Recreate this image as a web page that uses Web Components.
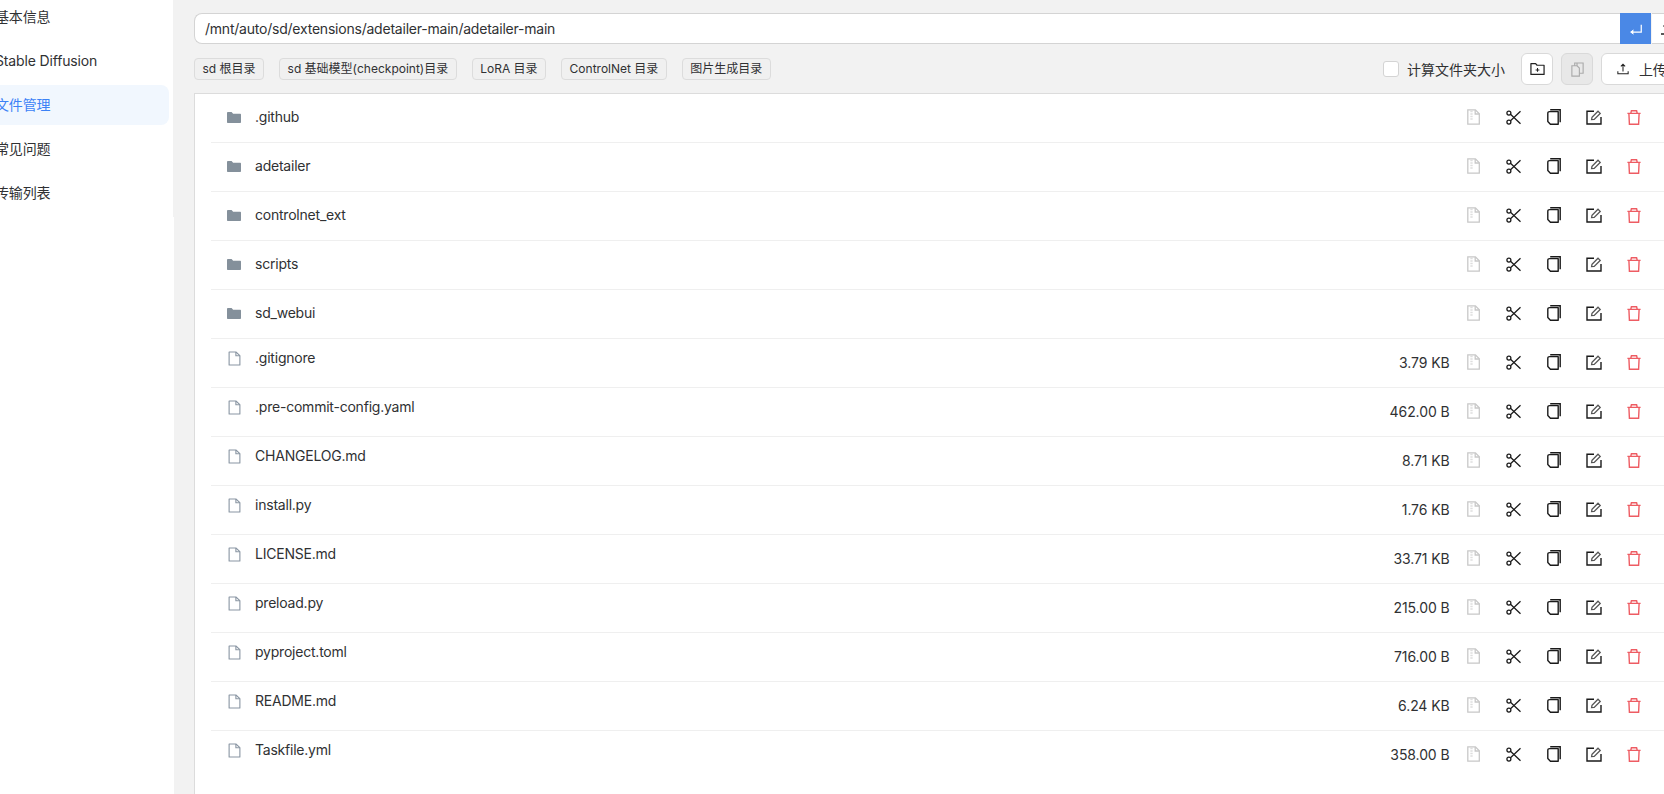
<!DOCTYPE html>
<html lang="zh">
<head>
<meta charset="utf-8">
<title>文件管理</title>
<style>
  html, body { margin: 0; height: 100%; overflow: hidden; background: #f2f2f2; }
  body { font-family: Inter, "Noto Sans CJK SC", sans-serif; color: #303133; letter-spacing: -0.22px; }
</style>
</head>
<body>
<app-shell>
  <side-menu slot="side"></side-menu>
  <path-bar slot="top" value="/mnt/auto/sd/extensions/adetailer-main/adetailer-main"></path-bar>
  <tool-bar slot="top"></tool-bar>
  <file-list slot="main"></file-list>
</app-shell>

<script>
const ICONS = {
  folder: `<svg viewBox="0 0 14 11"><path fill="#84909b" d="M0 1.2C0 .5.4 0 1 0h3.6l1.5 1.7H13c.6 0 1 .4 1 1V10c0 .6-.4 1-1 1H1c-.6 0-1-.4-1-1z"/></svg>`,
  file: `<svg viewBox="0 0 14 16" fill="none" stroke="#8a96a3" stroke-width="1.2"><path d="M1.2 1h7.3l4.3 4v10H1.2z" stroke-linejoin="round"/><path d="M8.5 1v4h4.3"/></svg>`,
  zip: `<svg viewBox="0 0 13 16" fill="none" stroke="#c8c8c8" stroke-width="1.3"><path d="M.8.8h7.6l3.9 4v10.4H.8z"/><path d="M8.2 1v4h4"/><path d="M3.6 2.5h2.2M3.6 5h2.2M3.6 7.5h2.2M3.6 10h2.2" stroke-width="1.6" stroke-dasharray="1 .8"/></svg>`,
  cut: `<svg viewBox="0 0 15 15" fill="none" stroke="#1a1a1a" stroke-width="1.25"><circle cx="2.9" cy="3" r="2"/><circle cx="2.9" cy="12" r="2"/><path d="M4.5 4.2 14.5 13.8M4.5 10.8 14.5 1.2"/></svg>`,
  copy: `<svg viewBox="0 0 14 16" fill="none" stroke="#1a1a1a" stroke-width="1.4"><path d="M2.6 2.6h8.6v12.6H3.4L.8 12.6V4.4C.8 3.2 1.5 2.6 2.6 2.6z" stroke-linejoin="round"/><path d="M3.2.8h10v12.4"/></svg>`,
  edit: `<svg viewBox="0 0 16 15" fill="none" stroke="#1a1a1a" stroke-width="1.4"><path d="M8 1.2H1v12.8H15V7"/><path d="M5.6 9.6 6 7.2 12 1.2l2.2 2.2-6 6z" fill="#fff" stroke="#555" stroke-width="1.3"/></svg>`,
  trash: `<svg viewBox="0 0 14 15" fill="none" stroke="#ee5c63" stroke-width="1.4"><path d="M.4 3.4h13.2M3.8 3.2 4.4.8h5.2l.6 2.4M1.9 3.5l.5 10.8h9.2l.5-10.8"/></svg>`,
  enter: `<svg viewBox="0 0 16 12" fill="none" stroke="#fff" stroke-width="1.4"><path d="M14 1v8.5H2"/><path d="M5 7 2 9.5 5 12" fill="#fff" stroke-width="1"/></svg>`,
  upload: `<svg viewBox="0 0 14 14" fill="none" stroke="#222" stroke-width="1.2"><path d="M7 10V1.5M4.5 4 7 1.5 9.5 4M1 9.5V12.5h12V9.5"/></svg>`,
  newdir: `<svg viewBox="0 0 16 14" fill="none" stroke="#222" stroke-width="1.3"><path d="M1 1.2h5l1.5 1.8H15v9.8H1z" stroke-linejoin="round"/><path d="M8 6v4M6 8h4" stroke-width="1.1"/></svg>`,
  paste: `<svg viewBox="0 0 14 16" fill="none" stroke="#aaa" stroke-width="1.2"><path d="M1 4h5.5L9 6.5V15H1z"/><path d="M4 4V1h9v11H9M6.5 1v3"/></svg>`,
  updir: `<svg viewBox="0 0 12 13" fill="none" stroke="#222" stroke-width="1.4"><path d="M6 9V1.5M2.5 4.5 6 1l3.5 3.5M0 12h12"/></svg>`,
};

const MENU = ["基本信息", "Stable Diffusion", "文件管理", "常见问题", "传输列表"];
const TAGS = ["sd 根目录", "sd 基础模型(checkpoint)目录", "LoRA 目录", "ControlNet 目录", "图片生成目录"];
const FILES = [
  [".github"], ["adetailer"], ["controlnet_ext"], ["scripts"], ["sd_webui"],
  [".gitignore", "3.79 KB"], [".pre-commit-config.yaml", "462.00 B"], ["CHANGELOG.md", "8.71 KB"],
  ["install.py", "1.76 KB"], ["LICENSE.md", "33.71 KB"], ["preload.py", "215.00 B"],
  ["pyproject.toml", "716.00 B"], ["README.md", "6.24 KB"], ["Taskfile.yml", "358.00 B"],
];

// Page frame: the window is scrolled a little sideways in the reference,
// so the frame is wider than the window and pulled to the left.
class AppShell extends HTMLElement {
  constructor() {
    super();
    this.attachShadow({ mode: "open" }).innerHTML = /*html*/`
      <style>
        :host { display: flex; height: 794px; width: 1760px; margin-left: -20px; }
        aside { flex: none; width: 194px; }
        section { flex: none; width: 1480px; padding: 13px 0 0 20px; box-sizing: border-box; min-height: 0; display: flex; flex-direction: column; }
      </style>
      <aside><slot name="side"></slot></aside>
      <section><slot name="top"></slot><slot name="main"></slot></section>`;
  }
}

class SideMenu extends HTMLElement {
  constructor() {
    super();
    const items = MENU.map((m, i) => `<li class="${i === 2 ? "on" : ""}">${m}</li>`).join("");
    this.attachShadow({ mode: "open" }).innerHTML = /*html*/`
      <style>
        :host { display: block; background: #fff; height: 100%; font-size: 14px; letter-spacing: -0.15px; }
        nav { height: 217px; border-right: 1px solid #f2f2f2; box-sizing: border-box; }
        ul { list-style: none; margin: 0; padding: 0 4px 0 0; position: relative; top: -3px; }
        li { height: 40px; line-height: 40px; margin-bottom: 4px; padding-left: 15px; border-radius: 8px; color: #303133; }
        li.on { background: #f1f7fe; color: #3b82f6; }
      </style>
      <nav><ul>${items}</ul></nav>`;
  }
}

class PathBar extends HTMLElement {
  constructor() {
    super();
    this.attachShadow({ mode: "open" }).innerHTML = /*html*/`
      <style>
        :host { display: flex; height: 31px; box-sizing: border-box; width: 1490px; font-size: 14px; }
        .field { flex: none; width: 1426px; box-sizing: border-box; background: #fff; border: 1px solid #d4d4d4; border-right: 0; border-radius: 8px 0 0 8px; padding: 0 10px; line-height: 30px; color: #303133; }
        .go { flex: none; width: 31px; background: #4a88e6; display: flex; align-items: center; justify-content: center; }
        .go svg { width: 14px; height: 12px; }
        .up { flex: none; width: 30px; margin-left: 1px; background: #fff; border: 1px solid #d4d4d4; border-width: 1px 0; box-sizing: border-box; display: flex; align-items: center; justify-content: flex-start; padding-left: 9px; }
        .up svg { flex: none; width: 12px; height: 13px; }
      </style>
      <div class="field"></div>
      <div class="go">${ICONS.enter}</div>
      <div class="up">${ICONS.updir}</div>`;
    this.shadowRoot.querySelector(".field").textContent = this.getAttribute("value");
  }
}

class ToolBar extends HTMLElement {
  constructor() {
    super();
    const tags = TAGS.map(t => `<span class="tag">${t}</span>`).join("");
    this.attachShadow({ mode: "open" }).innerHTML = /*html*/`
      <style>
        :host { display: flex; align-items: center; height: 32px; margin: 9px 0 8px; width: 1490px; }
        .tags { display: flex; gap: 15px; }
        .tag { height: 22px; line-height: 20px; box-sizing: border-box; padding: 0 7.5px; font-size: 12px; letter-spacing: 0; border: 1px solid #dcdcdc; border-radius: 4px; background: #f0f0f0; color: #303133; }
        .right { margin-left: auto; display: flex; align-items: center; }
        .check { width: 16px; height: 16px; box-sizing: border-box; border: 1px solid #d4d4d4; border-radius: 3px; background: #fff; margin-right: 8px; }
        .label { font-size: 14px; margin-right: 16px; color: #303133; letter-spacing: 0; }
        .btn { height: 32px; width: 32px; box-sizing: border-box; border: 1px solid #d9d9d9; border-radius: 6px; background: #fff; display: flex; align-items: center; justify-content: center; margin-right: 8px; }
        .btn.off { background: #e8e8e8; }
        .btn svg { width: 15px; height: 14px; }
        .btn.off svg { height: 15px; }
        .btn.wide { width: 83px; justify-content: flex-start; padding-left: 15px; gap: 10px; font-size: 14px; margin-right: 0; white-space: nowrap; }
        .btn.wide svg { flex: none; width: 12px; height: 12px; }
      </style>
      <div class="tags">${tags}</div>
      <div class="right">
        <span class="check"></span><span class="label">计算文件夹大小</span>
        <span class="btn">${ICONS.newdir}</span>
        <span class="btn off">${ICONS.paste}</span>
        <span class="btn wide">${ICONS.upload}<span>上传</span></span>
      </div>`;
  }
}

class FileList extends HTMLElement {
  constructor() {
    super();
    this.attachShadow({ mode: "open" }).innerHTML = /*html*/`
      <style>
        :host { display: block; flex: 1; background: #fff; border: 1px solid #dcdcdc; border-bottom: 0; width: 1490px; box-sizing: border-box; padding: 0 0 0 16px; }
      </style>
      <slot></slot>`;
    FILES.forEach(([name, size], i) => {
      const row = document.createElement("file-row");
      row.setAttribute("name", name);
      if (size) row.setAttribute("size", size);
      if (i === FILES.length - 1) row.setAttribute("last", "");
      this.appendChild(row);
    });
  }
}

class FileRow extends HTMLElement {
  connectedCallback() {
    const size = this.getAttribute("size");
    const root = this.attachShadow({ mode: "open" });
    root.innerHTML = /*html*/`
      <style>
        :host { display: flex; align-items: center; height: 49px; box-sizing: border-box; border-bottom: 1px solid #efefef; padding-bottom: 2px; font-size: 14px; color: #303133; padding-left: 16px; }
        :host([last]) { border-bottom-color: transparent; }
        .ico { flex: none; width: 28px; display: flex; }
        .folder svg { width: 14px; height: 11px; }
        .file svg { width: 13px; height: 15px; margin-left: .5px; }
        .name { flex: 1; position: relative; top: -1px; }
        .file { position: relative; top: -4px; }
        .file ~ .name { top: -5px; }
        .size { margin-right: 4px; letter-spacing: -0.1px; }
        .act { flex: none; display: flex; align-items: center; margin-right: 29px; }
        .act span { width: 40.3px; display: flex; justify-content: center; }
        .act svg { width: 14px; height: 16px; }
        .act .zip svg { width: 13px; height: 16px; }
        .act .cut svg { width: 15px; height: 15px; }
        .act .edit { margin-left: -1px; }
        .act .edit svg { width: 16px; height: 15px; }
        .act .trash svg { width: 14px; height: 15px; }
      </style>
      <span class="ico ${size ? "file" : "folder"}">${size ? ICONS.file : ICONS.folder}</span>
      <span class="name"></span>
      ${size ? `<span class="size">${size}</span>` : ""}
      <div class="act">
        <span class="zip">${ICONS.zip}</span><span class="cut">${ICONS.cut}</span><span>${ICONS.copy}</span><span class="edit">${ICONS.edit}</span><span class="trash">${ICONS.trash}</span>
      </div>`;
    root.querySelector(".name").textContent = this.getAttribute("name");
  }
}

customElements.define("app-shell", AppShell);
customElements.define("side-menu", SideMenu);
customElements.define("path-bar", PathBar);
customElements.define("tool-bar", ToolBar);
customElements.define("file-row", FileRow);
customElements.define("file-list", FileList);
</script>
</body>
</html>
